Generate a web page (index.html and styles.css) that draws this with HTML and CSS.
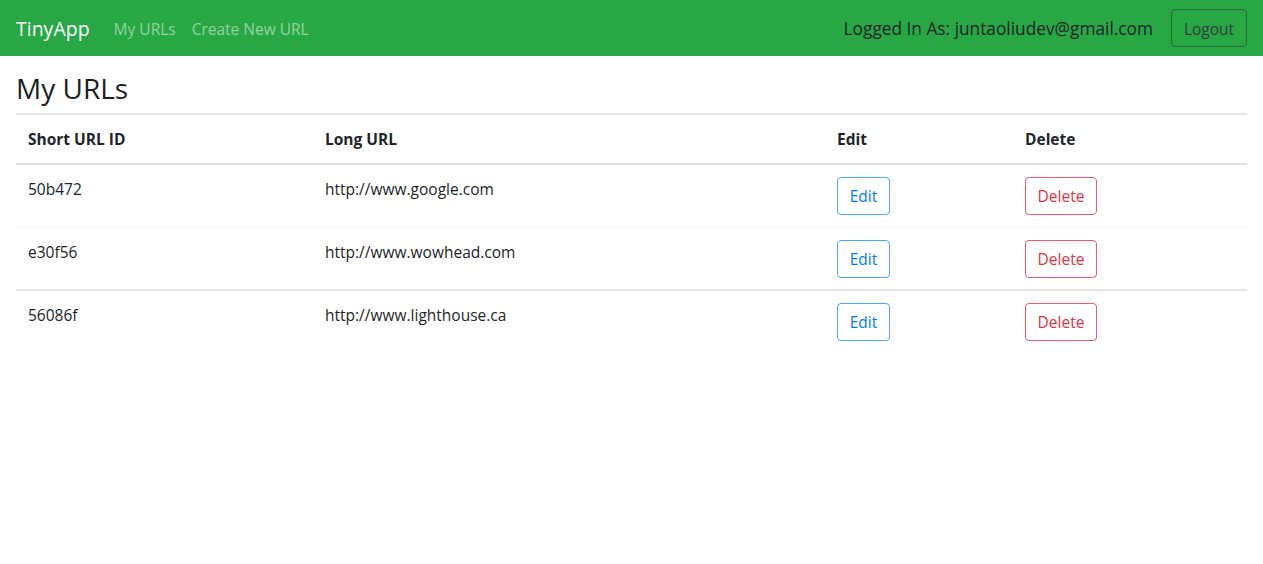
FILE: index.html
```html
<!DOCTYPE html>
<html lang="en">
<head>
<meta charset="utf-8">
<title>TinyApp</title>
<link rel="stylesheet" href="styles.css">
</head>
<body>
<nav class="navbar">
  <a class="brand" href="#">TinyApp</a>
  <div class="nav-links">
    <a class="nav-link" href="#">My URLs</a>
    <a class="nav-link" href="#">Create New URL</a>
  </div>
  <div class="nav-right">
    <span class="user">Logged In As: juntaoliudev@gmail.com</span>
    <button class="btn btn-logout">Logout</button>
  </div>
</nav>
<main class="main">
  <h2 class="title">My URLs</h2>
  <table class="table">
    <thead>
      <tr>
        <th class="col-id">Short URL ID</th>
        <th class="col-long">Long URL</th>
        <th class="col-edit">Edit</th>
        <th class="col-del">Delete</th>
      </tr>
    </thead>
    <tbody>
      <tr class="row-light">
        <td>50b472</td>
        <td>http://www.google.com</td>
        <td><button class="btn btn-edit">Edit</button></td>
        <td><button class="btn btn-delete">Delete</button></td>
      </tr>
      <tr class="row-strong">
        <td>e30f56</td>
        <td>http://www.wowhead.com</td>
        <td><button class="btn btn-edit">Edit</button></td>
        <td><button class="btn btn-delete">Delete</button></td>
      </tr>
      <tr>
        <td>56086f</td>
        <td>http://www.lighthouse.ca</td>
        <td><button class="btn btn-edit">Edit</button></td>
        <td><button class="btn btn-delete">Delete</button></td>
      </tr>
    </tbody>
  </table>
</main>
</body>
</html>
```

FILE: styles.css
```css
* { box-sizing: border-box; }
html, body { margin: 0; padding: 0; }
body {
  font-family: "Open Sans", "Noto Sans", "Liberation Sans", sans-serif;
  font-size: 15.5px;
  line-height: 24px;
  color: #212529;
  background: #fff;
}
a { text-decoration: none; }

.navbar {
  height: 56px;
  background: #28a745;
  display: flex;
  align-items: center;
  padding: 0 16px;
}
.brand {
  color: #fff;
  font-size: 19.5px;
  line-height: 30px;
  padding-top: 2px;
  margin-right: 16px;
}
.nav-links { display: flex; }
.nav-link {
  color: rgba(255,255,255,.5);
  padding: 10px 8px 8px;
}
.nav-right {
  margin-left: auto;
  display: flex;
  align-items: center;
  gap: 18px;
}
.user {
  color: #212529;
  font-size: 17.3px;
  padding-top: 2px;
}
.btn {
  font-family: inherit;
  font-size: 15.5px;
  line-height: 24px;
  height: 38px;
  padding: 6px 0;
  border-radius: 4px;
  background: transparent;
  border: 1px solid;
  cursor: pointer;
}
.btn-logout {
  width: 76px;
  padding: 7px 0 5px;
  color: #343a40;
  border-color: #2a6b3a;
}
.btn-edit {
  width: 53px;
  color: #007bff;
  border-color: #4da3ff;
}
.btn-delete {
  width: 72px;
  color: #dc3545;
  border-color: #e35d6a;
}

.main { padding: 0 16px; }
.title {
  font-size: 28px;
  font-weight: 500;
  line-height: 1.2;
  margin: 16px 0 7px;
  color: #1b1f23;
}
.table {
  width: 100%;
  border-collapse: separate;
  border-spacing: 0;
}
.table th, .table td {
  text-align: left;
  vertical-align: top;
  padding: 12px;
}
.table th {
  font-weight: 700;
  border-top: 2px solid #e3e6ea;
  border-bottom: 2px solid #dee2e6;
}
.col-id { width: 297px; }
.col-long { width: 512px; }
.col-edit { width: 188px; }
.col-del { width: 234px; }
.row-light td { border-bottom: 1px solid #f2f3f4; }
.row-strong td {
  padding-bottom: 11px;
  border-bottom: 2px solid #e3e6ea;
}
```
